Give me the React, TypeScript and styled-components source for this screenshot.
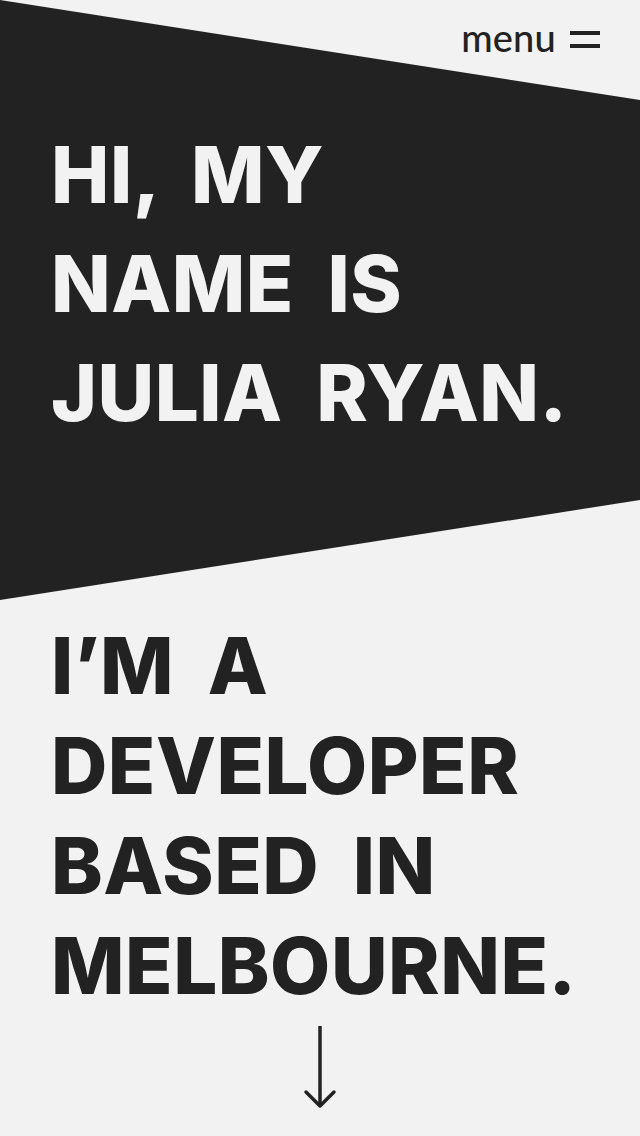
import React from "react";
import styled, { createGlobalStyle } from "styled-components";

const GlobalStyle = createGlobalStyle`
  html, body {
    margin: 0;
    padding: 0;
    background: #f2f2f2;
  }
  body {
    font-family: Lato, "Noto Sans", sans-serif;
    color: #222222;
  }
  * { box-sizing: border-box; }
`;

const Page = styled.div`
  position: relative;
  width: 640px;
  min-height: 1136px;
  background: #f2f2f2;
  overflow: hidden;
`;

const Header = styled.header`
  position: absolute;
  top: 15px;
  right: 40px;
  display: flex;
  align-items: center;
  gap: 14px;
  z-index: 2;
`;

const MenuLabel = styled.span`
  font-family: Lato, sans-serif;
  font-size: 38px;
  font-weight: 500;
  line-height: 44px;
  color: #222222;
  letter-spacing: 0.2px;
`;

const Burger = styled.span`
  display: flex;
  flex-direction: column;
  gap: 9px;
  padding-top: 4px;
`;

const BurgerLine = styled.span`
  display: block;
  width: 30px;
  height: 4px;
  background: #222222;
`;

const Hero = styled.section`
  height: 600px;
  background: #222222;
  clip-path: polygon(0 0, 100% 100px, 100% 500px, 0 100%);
  padding: 120px 0 0 51px;
`;

const Headline = styled.h1<{ $color: string; $lh: number }>`
  margin: 0;
  font-family: Inter, Lato, sans-serif;
  font-weight: 800;
  font-size: 78px;
  line-height: ${(p) => p.$lh}px;
  letter-spacing: 0.5px;
  word-spacing: 16px;
  text-transform: uppercase;
  color: ${(p) => p.$color};
  white-space: nowrap;
`;

const Line = styled.span`
  display: block;
`;

const Intro = styled.section`
  padding: 16px 0 0 51px;
`;

const ArrowWrap = styled.div`
  display: flex;
  justify-content: center;
  padding-top: 10px;
`;

export default function App() {
  return (
    <Page>
      <GlobalStyle />
      <Header>
        <MenuLabel>menu</MenuLabel>
        <Burger>
          <BurgerLine />
          <BurgerLine />
        </Burger>
      </Header>
      <Hero>
        <Headline $color="#f2f2f2" $lh={109}>
          <Line>Hi, my</Line>
          <Line>name is</Line>
          <Line>Julia Ryan.</Line>
        </Headline>
      </Hero>
      <Intro>
        <Headline as="h2" $color="#222222" $lh={100}>
          <Line>I’m a</Line>
          <Line>developer</Line>
          <Line>based in</Line>
          <Line>Melbourne.</Line>
        </Headline>
      </Intro>
      <ArrowWrap>
        <svg width="34" height="84" viewBox="0 0 34 84" fill="none" aria-hidden="true">
          <line x1="17" y1="0" x2="17" y2="80" stroke="#222222" strokeWidth="3.5" />
          <polyline
            points="3,66 17,80 31,66"
            stroke="#222222"
            strokeWidth="3.5"
            strokeLinecap="round"
            strokeLinejoin="round"
            fill="none"
          />
        </svg>
      </ArrowWrap>
    </Page>
  );
}
